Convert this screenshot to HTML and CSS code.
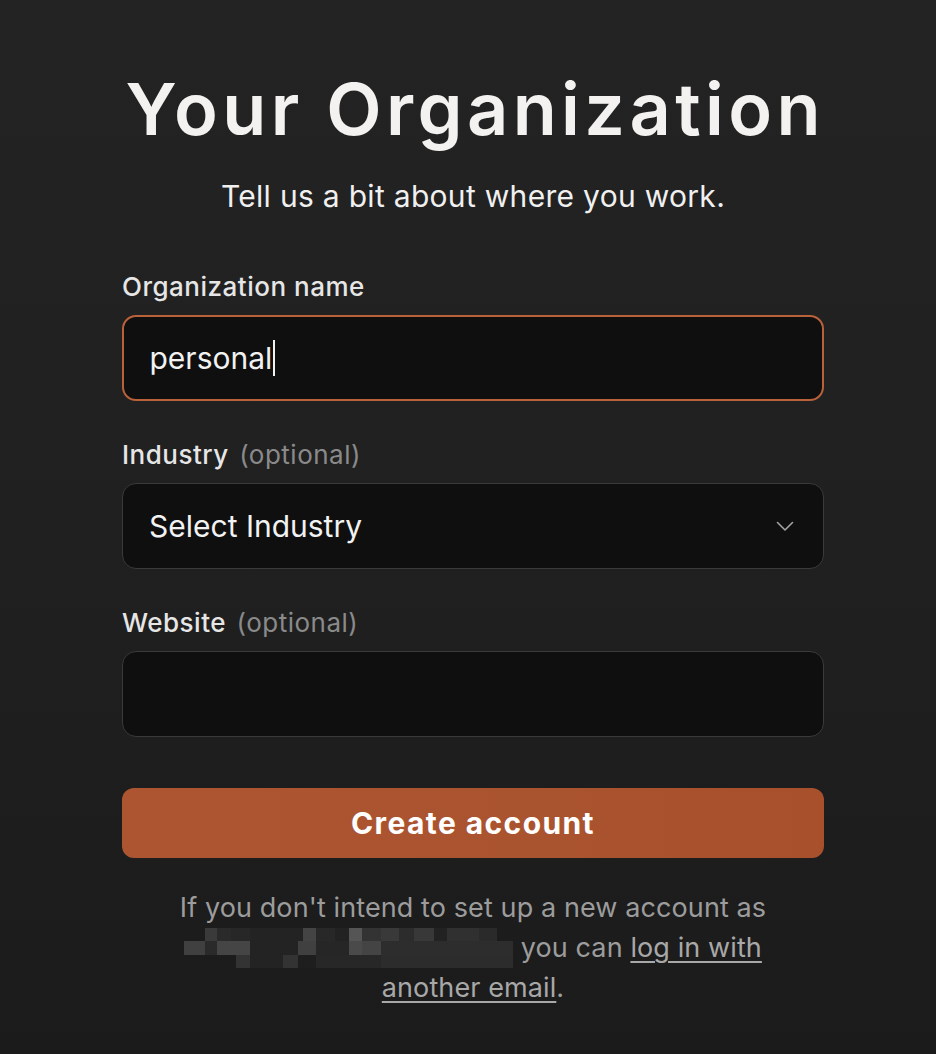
FILE: index.html
```html
<!DOCTYPE html>
<html lang="en">
<head>
<meta charset="utf-8">
<title>Your Organization</title>
<link rel="stylesheet" href="styles.css">
</head>
<body>
<main class="page">
  <h1 class="title">Your Organization</h1>
  <p class="subtitle">Tell us a bit about where you work.</p>

  <form class="form">
    <div class="group">
      <label class="label">Organization name</label>
      <div class="field focused"><span class="value">personal</span><span class="caret"></span></div>
    </div>

    <div class="group">
      <label class="label">Industry <span class="optional">(optional)</span></label>
      <div class="field select">
        <span class="value">Select Industry</span>
        <svg class="chevron" width="18" height="11" viewBox="0 0 18 11" fill="none"><path d="M1.5 1.5 L9 9 L16.5 1.5" stroke="#a3a3a3" stroke-width="1.6" stroke-linecap="round" stroke-linejoin="round"/></svg>
      </div>
    </div>

    <div class="group">
      <label class="label">Website <span class="optional">(optional)</span></label>
      <div class="field"></div>
    </div>

    <button type="button" class="submit">Create account</button>
  </form>

  <p class="footnote">If you don't intend to set up a new account as <span class="redacted"><span class="r1"></span><span class="r2"></span><span class="r3"></span></span> you can <a class="link" href="#">log in with another email</a>.</p>
</main>
</body>
</html>
```

FILE: styles.css
```css
html, body {
  margin: 0;
  padding: 0;
}

body {
  min-height: 1054px;
  background: linear-gradient(180deg, #232323 0%, #202020 50%, #1b1b1b 100%);
  color: #f2f2f2;
  font-family: Inter, "Noto Sans", "Liberation Sans", sans-serif;
}

.page {
  width: 702px;
  margin-left: 122px;
  padding-top: 66px;
  display: flex;
  flex-direction: column;
  align-items: center;
}

.title {
  margin: 0 -4.4px 0 0;
  font-size: 72px;
  line-height: 86px;
  font-weight: 600;
  letter-spacing: 4.4px;
  white-space: nowrap;
  color: #f3f2f0;
}

.subtitle {
  margin: 24px 0 0;
  font-size: 30px;
  line-height: 40px;
  font-weight: 400;
  letter-spacing: 0.3px;
  color: #f0f0f0;
}

.form {
  width: 100%;
  margin-top: 55px;
  display: flex;
  flex-direction: column;
}

.group {
  display: flex;
  flex-direction: column;
  gap: 12px;
  margin-bottom: 38px;
}

.label {
  font-size: 26px;
  line-height: 32px;
  font-weight: 500;
  letter-spacing: 0.5px;
  color: #e6e6e6;
}

.optional {
  color: #8a8a8a;
  font-weight: 400;
  margin-left: 3px;
}

.field {
  box-sizing: border-box;
  height: 86px;
  border: 1.5px solid #3a3a3a;
  border-radius: 14px;
  background: #0f0f0f;
  padding: 0 26px;
  display: flex;
  align-items: center;
  font-size: 30px;
  color: #f2f2f2;
}

.field.focused {
  border: 2px solid #b9623a;
  padding: 0 25.5px;
}

.caret {
  display: inline-block;
  width: 2px;
  height: 36px;
  background: #f2f2f2;
  margin-left: 1px;
}

.select {
  justify-content: space-between;
}

.chevron {
  margin-right: 3px;
}

.submit {
  margin-top: 13px;
  height: 70px;
  border: none;
  border-radius: 12px;
  background: linear-gradient(90deg, #ad5530 0%, #aa532f 60%, #a84f2b 100%);
  color: #ffffff;
  font-family: Inter, "Noto Sans", "Liberation Sans", sans-serif;
  font-size: 30px;
  font-weight: 700;
  letter-spacing: 1.4px;
  cursor: pointer;
}

.footnote {
  width: 610px;
  margin: 30px 0 0;
  text-align: center;
  font-size: 27px;
  line-height: 40px;
  letter-spacing: 0.1px;
  color: #9c9c9c;
}

.link {
  color: #a8a8a8;
  text-decoration: underline;
  text-underline-offset: 4px;
  text-decoration-thickness: 1.5px;
}

.redacted {
  display: inline-flex;
  flex-direction: column;
  width: 329px;
  height: 40px;
  vertical-align: top;
}

.redacted span {
  display: block;
  flex: 1;
}

.r1 {
  background: linear-gradient(90deg,
    transparent 0 21px, #3a3a3a 21px 33px, #2a2a2a 33px 47px, #272727 47px 66px,
    #232323 66px 119px, #444444 119px 132px, #282828 132px 151px, #222222 151px 165px,
    #555555 165px 178px, #333333 178px 197px, #393939 197px 215px, #2c2c2c 215px 230px,
    #383838 230px 250px, #222222 250px 263px, #303030 263px 295px, #2a2a2a 295px 313px,
    transparent 313px 329px);
}

.r2 {
  background: linear-gradient(90deg,
    #404040 0 21px, #2a2a2a 21px 33px, #454545 33px 66px, #232323 66px 114px,
    #404040 114px 132px, #262626 132px 165px, #4a4a4a 165px 178px, #444444 178px 197px,
    #2d2d2d 197px 329px);
}

.r3 {
  background: linear-gradient(90deg,
    transparent 0 52px, #333333 52px 66px, #232323 66px 99px, #333333 99px 114px,
    #1e1e1e 114px 132px, #272727 132px 197px, #2c2c2c 197px 329px);
}
```
